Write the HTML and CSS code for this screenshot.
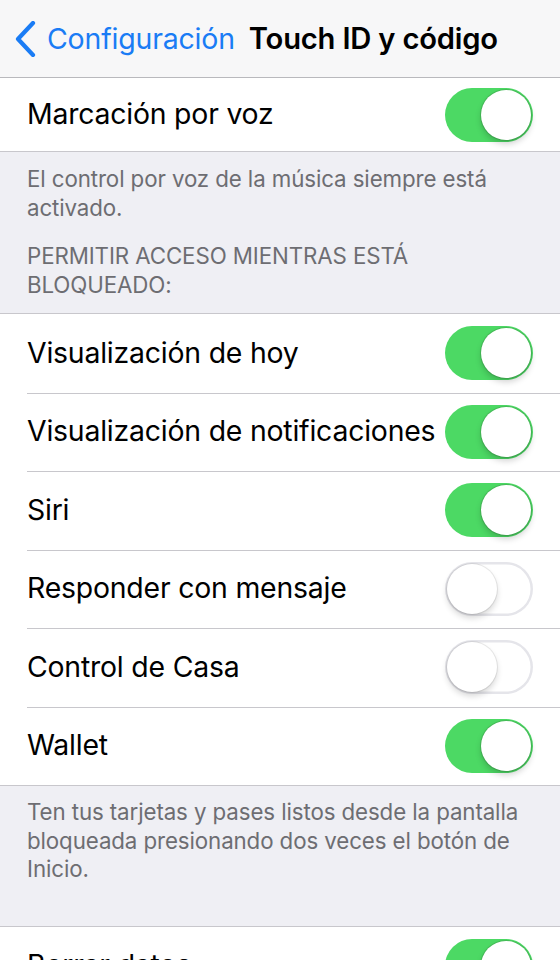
FILE: index.html
```html
<!DOCTYPE html>
<html lang="es">
<head>
<meta charset="utf-8">
<title>Touch ID y código</title>
<link rel="stylesheet" href="styles.css">
</head>
<body>
<div class="screen">
  <header class="nav">
    <div class="back">
      <svg class="chev" width="22" height="36" viewBox="0 0 22 36"><path d="M19 2 L4 18 L19 34" fill="none" stroke="#1a7cf5" stroke-width="4.2" stroke-linecap="round" stroke-linejoin="round"/></svg>
      <span class="back-label">Configuración</span>
    </div>
    <h1 class="title">Touch ID y código</h1>
  </header>

  <section class="group group-first">
    <div class="row"><span class="label">Marcación por voz</span><span class="switch on"><span class="knob"></span></span></div>
  </section>

  <div class="footer">El control por voz de la música siempre está activado.</div>
  <div class="header">PERMITIR ACCESO MIENTRAS ESTÁ BLOQUEADO:</div>

  <section class="group">
    <div class="row"><span class="label">Visualización de hoy</span><span class="switch on"><span class="knob"></span></span></div>
    <div class="row"><span class="label">Visualización de notificaciones</span><span class="switch on"><span class="knob"></span></span></div>
    <div class="row"><span class="label">Siri</span><span class="switch on"><span class="knob"></span></span></div>
    <div class="row"><span class="label">Responder con mensaje</span><span class="switch"><span class="knob"></span></span></div>
    <div class="row"><span class="label">Control de Casa</span><span class="switch"><span class="knob"></span></span></div>
    <div class="row"><span class="label">Wallet</span><span class="switch on"><span class="knob"></span></span></div>
  </section>

  <div class="footer footer-wallet">Ten tus tarjetas y pases listos desde la pantalla bloqueada presionando dos veces el botón de Inicio.</div>

  <section class="group">
    <div class="row"><span class="label">Borrar datos</span><span class="switch on"><span class="knob"></span></span></div>
  </section>
</div>
</body>
</html>
```

FILE: styles.css
```css
* { box-sizing: border-box; }
html, body { margin: 0; padding: 0; }
body {
  width: 560px;
  height: 960px;
  overflow: hidden;
  background: #efeff4;
  font-family: Inter, "Noto Sans", "Liberation Sans", sans-serif;
  -webkit-font-smoothing: antialiased;
}
.screen { display: flex; flex-direction: column; }

.nav {
  height: 78px;
  background: #f7f7f8;
  border-bottom: 1px solid #b9b9bd;
  display: flex;
  align-items: center;
  padding: 0 0 0 14px;
  flex-shrink: 0;
}
.back { display: flex; align-items: center; gap: 11px; }
.chev { display: block; margin-top: 1px; }
.back-label { color: #1a7cf5; font-size: 28.5px; letter-spacing: -0.2px; }
.title {
  margin: 0 0 0 14px;
  font-size: 29.2px;
  font-weight: 600;
  color: #000;
  letter-spacing: -0.2px;
}

.group {
  background: #fff;
  border-top: 1px solid #c8c7cc;
  border-bottom: 1px solid #c8c7cc;
  flex-shrink: 0;
}
.group-first { border-top: 0; }
.row {
  height: 78.5px;
  display: flex;
  align-items: center;
  justify-content: space-between;
  padding: 0 27px 2px 27px;
  position: relative;
}
.row .switch { margin-bottom: -2px; }
.group-first .row { height: 73px; }
.row + .row::before {
  content: "";
  position: absolute;
  left: 27px; right: 0; top: 0;
  border-top: 1px solid #c8c7cc;
}
.label { font-size: 28.4px; color: #000; letter-spacing: -0.2px; white-space: nowrap; }

.switch {
  width: 88px;
  height: 54px;
  border-radius: 27px;
  background: #fff;
  box-shadow: inset 0 0 0 2.5px #e5e5ea;
  position: relative;
  flex-shrink: 0;
}
.switch.on { background: #4cd964; box-shadow: none; }
.knob {
  position: absolute;
  top: 2px;
  left: 2px;
  width: 50px;
  height: 50px;
  border-radius: 50%;
  background: #fff;
  box-shadow: 0 4px 6px rgba(0,0,0,0.16), 0 0 0 1px rgba(0,0,0,0.08);
}
.switch.on .knob { left: 36px; box-shadow: 0 4px 6px rgba(0,0,0,0.18), 0 0 0 1px rgba(60,140,70,0.35); }

.footer, .header {
  font-size: 22.3px;
  line-height: 28.5px;
  color: #6d6d72;
  padding: 0 20px 0 27px;
  letter-spacing: -0.1px;
}
.footer { padding-top: 13px; }
.header { padding-top: 20px; padding-bottom: 14px; }
.footer-wallet { padding-top: 12px; padding-bottom: 42px; }
```
